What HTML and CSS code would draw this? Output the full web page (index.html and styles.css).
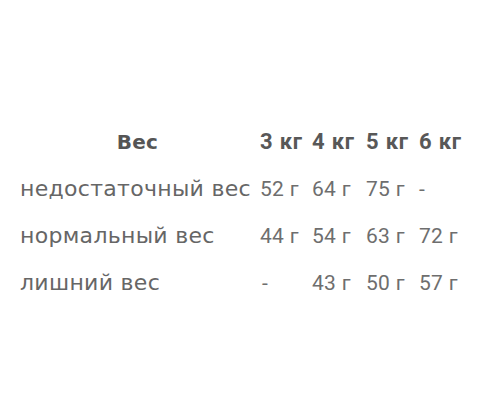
FILE: index.html
```html
<!DOCTYPE html>
<html lang="ru">
<head>
<meta charset="utf-8">
<link rel="stylesheet" href="styles.css">
</head>
<body>
<div class="weights">
  <div class="row head">
    <div class="label">Вес</div>
    <div class="num">3 кг</div>
    <div class="num">4 кг</div>
    <div class="num">5 кг</div>
    <div class="num">6 кг</div>
  </div>
  <div class="row">
    <div class="label">недостаточный вес</div>
    <div class="num">52 г</div>
    <div class="num">64 г</div>
    <div class="num">75 г</div>
    <div class="num">-</div>
  </div>
  <div class="row">
    <div class="label">нормальный вес</div>
    <div class="num">44 г</div>
    <div class="num">54 г</div>
    <div class="num">63 г</div>
    <div class="num">72 г</div>
  </div>
  <div class="row">
    <div class="label">лишний вес</div>
    <div class="num dash">-</div>
    <div class="num">43 г</div>
    <div class="num">50 г</div>
    <div class="num">57 г</div>
  </div>
</div>
</body>
</html>
```
FILE: styles.css
```css
html, body {
  margin: 0;
  padding: 0;
  background: #ffffff;
}
.weights {
  padding: 118px 0 0 20px;
  color: #666666;
}
.row {
  display: grid;
  grid-template-columns: 240px 52px 54px 53px auto;
  height: 47px;
  align-items: center;
}
.label {
  font-family: "DejaVu Sans", sans-serif;
  font-size: 22px;
  white-space: nowrap;
  letter-spacing: 0.3px;
}
.num {
  font-family: Roboto, "Liberation Sans", sans-serif;
  font-size: 21px;
  font-weight: 400;
  letter-spacing: 0.3px;
  white-space: nowrap;
  color: #6e6e6e;
}
.dash {
  padding-left: 2px;
}
.head {
  color: #555555;
}
.head .label {
  font-weight: bold;
  text-align: center;
  font-size: 20px;
  padding-right: 5px;
}
.head .num {
  font-weight: bold;
  color: #585858;
  font-size: 22px;
  letter-spacing: 0.8px;
}
```
